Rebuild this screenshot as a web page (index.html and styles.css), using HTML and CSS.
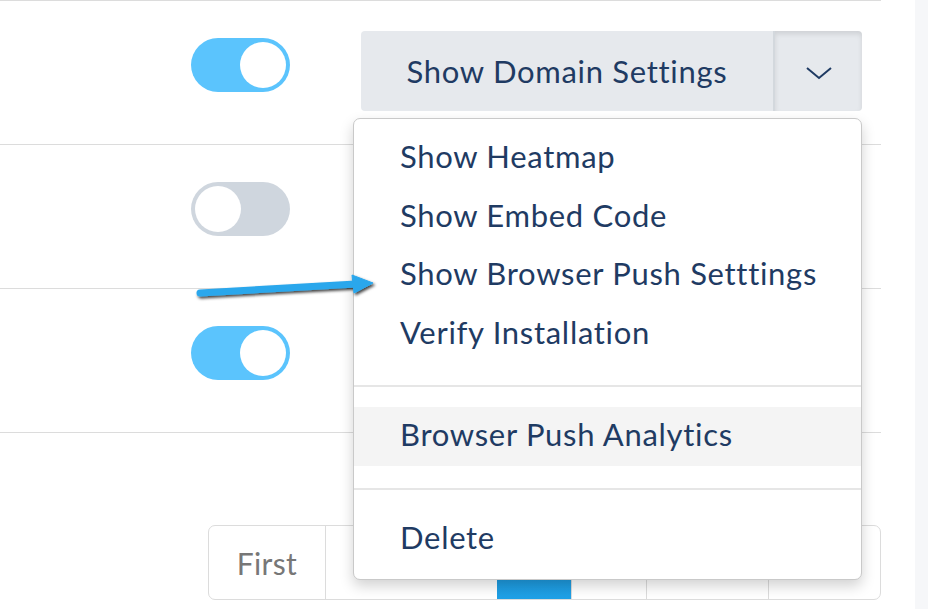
FILE: index.html
```html
<!DOCTYPE html>
<html lang="en">

<head>
    <meta charset="UTF-8">
    <meta name="viewport" content="width=device-width, initial-scale=1.0">
    <link rel="stylesheet" href="styles.css">
    <title>Domains</title>
</head>

<body>
    <div class="page">
        <div class="main">
            <div class="row">
                <span class="toggle on"><span class="knob"></span></span>
                <div class="actions open">
                    <button class="btn btn-main">Show Domain Settings</button>
                    <button class="btn btn-caret">
                        <svg width="28" height="16" viewBox="0 0 28 16"><polyline points="2,3 14,13 26,3" fill="none" stroke="#1f3b63" stroke-width="2"/></svg>
                    </button>
                    <ul class="menu">
                        <li>Show Heatmap</li>
                        <li>Show Embed Code</li>
                        <li>Show Browser Push Setttings</li>
                        <li>Verify Installation</li>
                        <li class="divider"></li>
                        <li class="hover">Browser Push Analytics</li>
                        <li class="divider"></li>
                        <li>Delete</li>
                    </ul>
                </div>
            </div>
            <div class="row">
                <span class="toggle"><span class="knob"></span></span>
                <div class="actions">
                    <button class="btn btn-main">Show Domain Settings</button>
                    <button class="btn btn-caret">
                        <svg width="28" height="16" viewBox="0 0 28 16"><polyline points="2,3 14,13 26,3" fill="none" stroke="#1f3b63" stroke-width="2"/></svg>
                    </button>
                </div>
            </div>
            <div class="row">
                <span class="toggle on"><span class="knob"></span></span>
                <div class="actions">
                    <button class="btn btn-main">Show Domain Settings</button>
                    <button class="btn btn-caret">
                        <svg width="28" height="16" viewBox="0 0 28 16"><polyline points="2,3 14,13 26,3" fill="none" stroke="#1f3b63" stroke-width="2"/></svg>
                    </button>
                </div>
            </div>
            <div class="pager-wrap">
                <ul class="pager">
                    <li>First</li>
                    <li>Previous</li>
                    <li class="active">1</li>
                    <li>2</li>
                    <li>Next</li>
                    <li>Last</li>
                </ul>
            </div>
        </div>
        <div class="side"></div>

        <!-- annotation arrow -->
        <svg class="arrow" width="195" height="40" viewBox="0 0 195 40">
            <defs>
                <filter id="sh" x="-10%" y="-50%" width="120%" height="200%">
                    <feDropShadow dx="1.5" dy="2" stdDeviation="1.4" flood-color="#000" flood-opacity="0.75"/>
                </filter>
            </defs>
            <g filter="url(#sh)" fill="#2ba7ec" stroke="#2ba7ec">
                <line x1="10" y1="28" x2="166" y2="19" stroke-width="7" stroke-linecap="round"/>
                <polygon points="162,10 183,18 164,28" stroke-width="1" stroke-linejoin="round"/>
            </g>
        </svg>
    </div>
</body>

</html>
```

FILE: styles.css
```css
* {
    margin: 0;
    padding: 0;
    box-sizing: border-box;
}

ul,
li {
    list-style: none;
}

body {
    font-family: Lato, "Open Sans", sans-serif;
    color: #1f3b63;
    background: #fff;
}

.page {
    display: flex;
    height: 609px;
    position: relative;
    overflow: hidden;
}

.main {
    width: 881px;
    border-top: 1px solid #dcdcdc;
}

.side {
    flex: 1;
    margin-left: 34px;
    background-color: #f6f7f9;
}

.row {
    height: 144px;
    border-bottom: 1px solid #dcdcdc;
    display: flex;
    justify-content: flex-end;
    align-items: flex-start;
    gap: 71px;
    padding: 30px 19px 0 0;
}

.toggle {
    display: block;
    width: 99px;
    height: 54px;
    margin-top: 7px;
    border-radius: 27px;
    background-color: #cfd6de;
    padding: 4px;
}

.toggle .knob {
    display: block;
    width: 46px;
    height: 46px;
    border-radius: 50%;
    background-color: #fff;
}

.toggle.on {
    background-color: #5bc4fd;
}

.toggle.on .knob {
    margin-left: auto;
}

.actions {
    display: flex;
    position: relative;
}

.btn {
    height: 80px;
    border: 0;
    background-color: #e6e9ed;
    font-family: inherit;
    color: inherit;
    font-size: 31px;
    letter-spacing: 0.7px;
}

.btn-main {
    width: 412px;
    border-radius: 4px 0 0 4px;
}

.btn-caret {
    width: 89px;
    border-left: 2px solid #d3d8dd;
    border-radius: 0 4px 4px 0;
    display: flex;
    align-items: center;
    justify-content: center;
    padding-top: 4px;
}

.open .btn-caret {
    box-shadow: inset 0 3px 5px rgba(0, 0, 0, 0.1);
}

.menu {
    position: absolute;
    top: 87px;
    right: 0;
    width: 509px;
    background-color: #fff;
    border: 1px solid #c9c9c9;
    border-radius: 7px;
    padding: 10px 0 11px;
    box-shadow: 0 6px 14px rgba(0, 0, 0, 0.18);
    z-index: 2;
}

.menu li {
    height: 58.5px;
    line-height: 55px;
    padding-left: 46px;
    font-size: 31px;
    letter-spacing: 0.7px;
    white-space: nowrap;
}

.menu li.hover {
    background-color: #f4f4f4;
}

.menu li.divider {
    height: 2px;
    margin: 22px 0 20px;
    background-color: #e6e6e6;
}

.pager-wrap {
    display: flex;
    justify-content: flex-end;
    padding-top: 92px;
}

.pager {
    display: flex;
    height: 75px;
    border: 1px solid #dcdcdc;
    border-radius: 7px;
    overflow: hidden;
}

.pager li {
    display: flex;
    align-items: center;
    padding: 0 28px;
    font-size: 30px;
    letter-spacing: 0.3px;
    color: #777;
    border-left: 1px solid #dcdcdc;
}

.pager li:first-child {
    border-left: 0;
}

.pager li.active {
    color: #fff;
    background: linear-gradient(#1a85c6, #1fa1e7);
    border-left: 0;
}

.arrow {
    position: absolute;
    left: 190px;
    top: 265px;
    z-index: 3;
}
```
